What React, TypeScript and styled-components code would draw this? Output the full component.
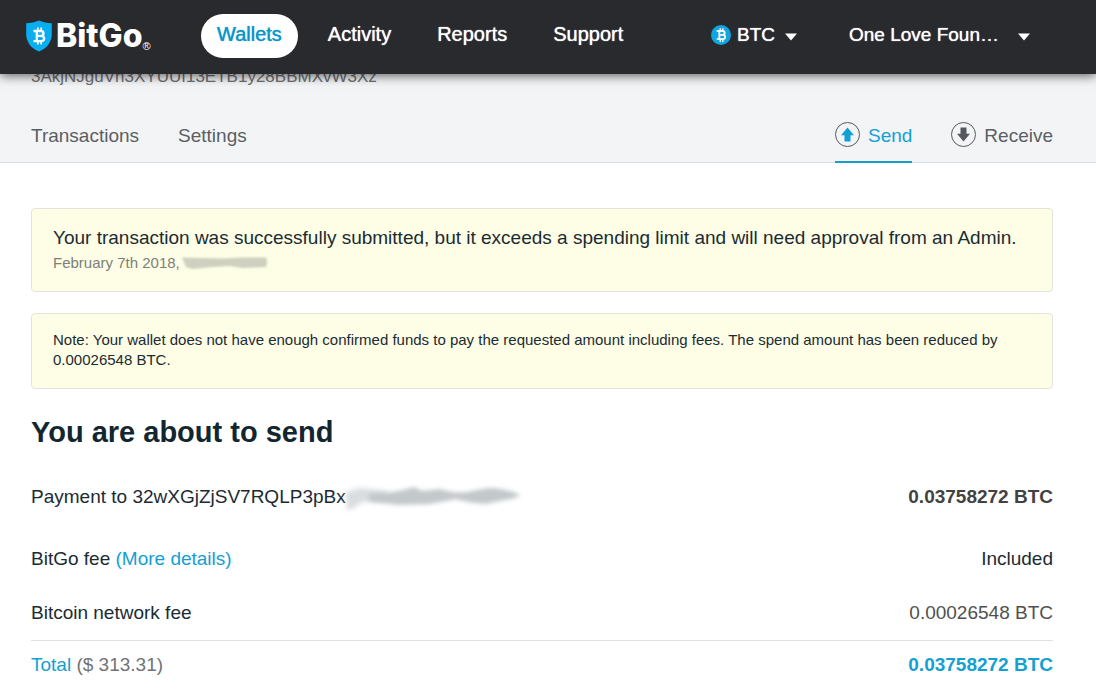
import React from "react";
import styled, { createGlobalStyle } from "styled-components";

const GlobalStyle = createGlobalStyle`
  *, *::before, *::after { box-sizing: border-box; }
  body {
    margin: 0;
    background: #ffffff;
    color: #1b2b34;
    font-family: "Liberation Sans", Arial, sans-serif;
    font-size: 19px;
    line-height: 24px;
  }
  a { color: inherit; text-decoration: none; }
`;

const TopBar = styled.header`
  position: sticky;
  top: 0;
  z-index: 1;
  display: flex;
  align-items: center;
  height: 74px;
  padding: 0 66px 2px 26px;
  background: #292a2d;
  box-shadow: 0 2px 10px rgba(0, 0, 0, 0.6);
`;

const Logo = styled.a`
  display: flex;
  align-items: center;
  width: 175px;
  color: #ffffff;
`;

const Wordmark = styled.span`
  margin-left: 4px;
  font: 800 32px/40px Inter, sans-serif;
`;

const Registered = styled.span`
  align-self: flex-end;
  font: 11px/20px "Liberation Sans", Arial, sans-serif;
`;

const MainNav = styled.nav`
  display: flex;
  gap: 14px;
`;

const NavLink = styled.a<{ $active?: boolean }>`
  height: 44px;
  padding: 0 16px;
  border-radius: 22px;
  font-size: 20px;
  line-height: 40px;
  background: ${(p) => (p.$active ? "#ffffff" : "transparent")};
  color: ${(p) => (p.$active ? "#0d94c9" : "#ffffff")};
  text-shadow: 0 0 1px currentColor;
`;

const Pickers = styled.div`
  display: flex;
  align-items: center;
  gap: 52px;
  margin-left: auto;
  padding-bottom: 2px;
`;

const Picker = styled.label<{ $gap: number }>`
  display: flex;
  align-items: center;
  color: #ffffff;

  select {
    margin-right: ${(p) => p.$gap}px;
  }
`;

const PickerSelect = styled.select`
  appearance: none;
  padding: 0;
  border: 0;
  background: transparent;
  color: inherit;
  font: 19px/24px "Liberation Sans", Arial, sans-serif;
  text-shadow: 0 0 1px currentColor;
`;

const CoinIcon = styled.svg`
  margin-right: 6px;
`;

const Caret = styled.svg`
  margin-top: 4px;
`;

const WalletBar = styled.section`
  padding: 0 43px 0 31px;
  background: #f3f4f6;
  border-bottom: 1px solid #dcdfe2;
`;

const WalletAddress = styled.p`
  margin: -9px 0 0;
  color: #6e6f71;
  font-size: 17px;
`;

const TabRow = styled.div`
  display: flex;
  justify-content: space-between;
  align-items: flex-end;
  margin: 22px 0 -1px;
`;

const TabGroup = styled.nav`
  display: flex;
  gap: 39px;
`;

const Tab = styled.a<{ $active?: boolean }>`
  display: flex;
  align-items: center;
  gap: 8px;
  height: 52px;
  border-bottom: 2px solid ${(p) => (p.$active ? "#1b9ccb" : "transparent")};
  color: ${(p) => (p.$active ? "#12a0d7" : "#5b5f63")};

  svg {
    margin-bottom: 4px;
  }
`;

const Content = styled.main`
  padding: 45px 43px 16px 31px;
`;

const Notice = styled.div`
  margin-bottom: 21px;
  padding: 16px 21px;
  background: #fdfee5;
  border: 1px solid #e2e5dc;
  border-radius: 4px;
`;

const NoticeTitle = styled.p`
  margin: 0;
  line-height: 26px;
`;

const NoticeMeta = styled.p`
  display: flex;
  align-items: center;
  margin: 0;
  color: #7d7e78;
  font-size: 15px;
`;

const NoticeText = styled.p`
  margin: 0 0 2px;
  font-size: 15px;
  line-height: 20px;
`;

const Heading = styled.h1`
  margin: 26px 0 22px;
  font-size: 29px;
  line-height: 34px;
  font-weight: 700;
  color: #122630;
`;

const Summary = styled.table`
  width: 100%;
  border-collapse: collapse;
`;

const Row = styled.tr<{ $first?: boolean; $total?: boolean }>`
  border-top: ${(p) => (p.$total ? "1px solid #dfe1e3" : "0")};
  th, td {
    padding: ${(p) => (p.$total ? "12px 0" : p.$first ? "14px 0 23px" : "15px 0")};
  }
`;

const Label = styled.th`
  text-align: left;
  font-weight: 400;
`;

const LabelLine = styled.span`
  display: flex;
  align-items: center;
`;

const Amount = styled.td<{ $color?: string; $bold?: boolean }>`
  text-align: right;
  color: ${(p) => p.$color ?? "inherit"};
  font-weight: ${(p) => (p.$bold ? 700 : 400)};
`;

const Accent = styled.span`
  color: #14a0d2;
`;

const DetailsLink = styled.a`
  color: #14a0d2;
`;

const Muted = styled.span`
  color: #717375;
`;

const BitcoinMark = () => (
  <g fill="none" stroke="#ffffff" strokeWidth="2.3">
    <path d="M-6 -5H1.2C4.9 -5 4.9 -0.2 1.2 -0.2H-2M1.2 -0.2C5.9 -0.2 5.7 5.2 1.2 5.2H-6M-2.7 -5V5.2" />
    <path d="M-1.6 -8.4V-5M1.7 -8.4V-5M-1.6 5.2V8.6M1.7 5.2V8.6" strokeWidth="1.7" />
  </g>
);

const Shield = () => (
  <svg width="26" height="32" viewBox="0 0 26 32" aria-hidden="true">
    <path
      d="M13 0.5C9.4 2.2 5.2 3.1 0.2 3.2V14.5C0.4 22.5 5.4 28.5 13 31.5C20.6 28.5 25.6 22.5 25.8 14.5V3.2C20.8 3.1 16.6 2.2 13 0.5Z"
      fill="#0aaef0"
    />
    <g transform="translate(13.5 16)">
      <BitcoinMark />
    </g>
  </svg>
);

const Coin = () => (
  <CoinIcon width="20" height="20" viewBox="0 0 20 20" aria-hidden="true">
    <circle cx="10" cy="10" r="10" fill="#0fa6e2" />
    <g transform="translate(10.5 10) scale(0.8)">
      <BitcoinMark />
    </g>
  </CoinIcon>
);

const DownCaret = () => (
  <Caret width="12" height="8" viewBox="0 0 12 8" aria-hidden="true">
    <path d="M0 0.5H12L6 7.5Z" fill="#ffffff" />
  </Caret>
);

const ArrowCircle = ({ down, color }: { down?: boolean; color: string }) => (
  <svg width="25" height="25" viewBox="0 0 25 25" aria-hidden="true">
    <circle cx="12.5" cy="12.5" r="12" fill="none" stroke="#55595e" />
    <path
      d="M12.5 5.5L19 13.2H15.5V19.5H9.5V13.2H6Z"
      fill={color}
      transform={down ? "rotate(180 12.5 12.5)" : undefined}
    />
  </svg>
);

const SmallSmudge = () => (
  <svg width="90" height="18" viewBox="0 0 90 18" aria-hidden="true">
    <defs>
      <filter id="smudge-small" x="-10%" y="-30%" width="120%" height="160%">
        <feGaussianBlur stdDeviation="1.2" />
      </filter>
    </defs>
    <path
      d="M2 3.5L20 4L45 4.5L62 3.5L86 3.5Q88 8 86 13L62 14L50 12L32 13L12 15L6 13Z"
      fill="#cfd0bf"
      filter="url(#smudge-small)"
    />
  </svg>
);

const LargeSmudge = () => (
  <svg width="184" height="24" viewBox="2 0 184 24" overflow="visible" aria-hidden="true">
    <defs>
      <filter id="smudge-light" x="-30%" y="-40%" width="160%" height="180%">
        <feGaussianBlur stdDeviation="2.4" />
      </filter>
      <filter id="smudge-large" x="-10%" y="-40%" width="120%" height="180%">
        <feGaussianBlur stdDeviation="2" />
      </filter>
    </defs>
    <path
      d="M2 7L16 3L44 6L40 17L18 17L8 24L3 25Z"
      fill="#d9dddf"
      filter="url(#smudge-light)"
    />
    <path
      d="M24 9Q52 8 70 2L78 6L96 4Q114 10 128 6L144 3Q160 3 176 10Q172 14 160 15L142 19Q124 18 112 14L86 19L54 20Q40 18 26 16Z"
      fill="#c3c8ca"
      filter="url(#smudge-large)"
    />
  </svg>
);

const navItems = ["Wallets", "Activity", "Reports", "Support"];

export default function App() {
  return (
    <>
      <GlobalStyle />
      <TopBar>
        <Logo href="#" aria-label="BitGo home">
          <Shield />
          <Wordmark>BitGo</Wordmark>
          <Registered>®</Registered>
        </Logo>
        <MainNav>
          {navItems.map((item, i) => (
            <NavLink key={item} href="#" $active={i === 0}>
              {item}
            </NavLink>
          ))}
        </MainNav>
        <Pickers>
          <Picker $gap={10}>
            <Coin />
            <PickerSelect aria-label="Currency">
              <option>BTC</option>
            </PickerSelect>
            <DownCaret />
          </Picker>
          <Picker $gap={19}>
            <PickerSelect aria-label="Organization">
              <option>One Love Foun…</option>
            </PickerSelect>
            <DownCaret />
          </Picker>
        </Pickers>
      </TopBar>

      <WalletBar>
        <WalletAddress>3AkjNJguVh3XYUUf13ETB1y28BBMXvW3Xz</WalletAddress>
        <TabRow>
          <TabGroup aria-label="Wallet">
            <Tab href="#">Transactions</Tab>
            <Tab href="#">Settings</Tab>
          </TabGroup>
          <TabGroup aria-label="Transfer">
            <Tab href="#" $active>
              <ArrowCircle color="#12a0d7" />
              Send
            </Tab>
            <Tab href="#">
              <ArrowCircle down color="#55595e" />
              Receive
            </Tab>
          </TabGroup>
        </TabRow>
      </WalletBar>

      <Content>
        <Notice role="status">
          <NoticeTitle>
            Your transaction was successfully submitted, but it exceeds a spending limit and will
            need approval from an Admin.
          </NoticeTitle>
          <NoticeMeta>
            February 7th 2018,
            <SmallSmudge />
          </NoticeMeta>
        </Notice>
        <Notice role="note">
          <NoticeText>
            Note: Your wallet does not have enough confirmed funds to pay the requested amount
            including fees. The spend amount has been reduced by 0.00026548 BTC.
          </NoticeText>
        </Notice>

        <Heading>You are about to send</Heading>
        <Summary>
          <tbody>
            <Row $first>
              <Label scope="row">
                <LabelLine>
                  Payment to 32wXGjZjSV7RQLP3pBx
                  <LargeSmudge />
                </LabelLine>
              </Label>
              <Amount $color="#424242" $bold>
                0.03758272 BTC
              </Amount>
            </Row>
            <Row>
              <Label scope="row">
                BitGo fee <DetailsLink href="#">(More details)</DetailsLink>
              </Label>
              <Amount>Included</Amount>
            </Row>
            <Row>
              <Label scope="row">Bitcoin network fee</Label>
              <Amount $color="#505050">0.00026548 BTC</Amount>
            </Row>
            <Row $total>
              <Label scope="row">
                <Accent>Total</Accent> <Muted>($ 313.31)</Muted>
              </Label>
              <Amount $color="#14a0d2" $bold>
                0.03758272 BTC
              </Amount>
            </Row>
          </tbody>
        </Summary>
      </Content>
    </>
  );
}
